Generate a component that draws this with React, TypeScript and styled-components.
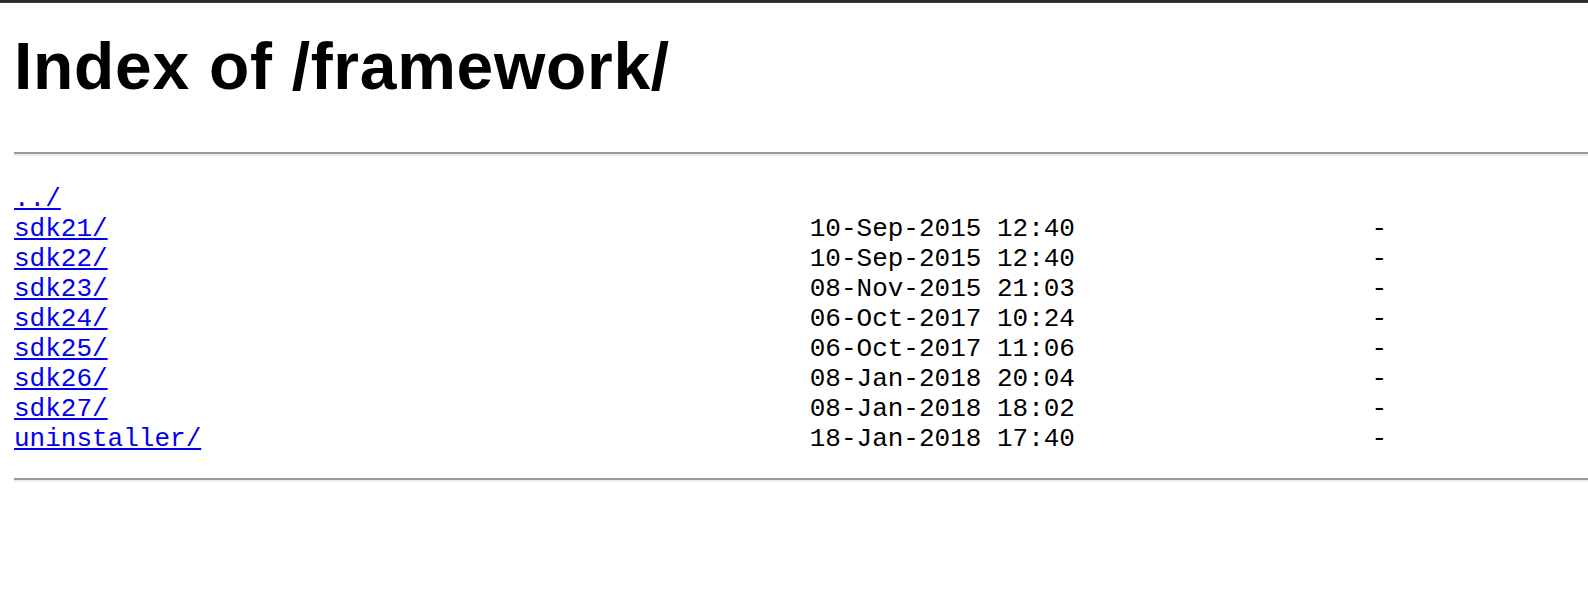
import React from 'react'
import styled, { createGlobalStyle } from 'styled-components'

const GlobalStyle = createGlobalStyle`
  html, body {
    margin: 0;
    padding: 0;
    background: #ffffff;
  }
`

interface Entry {
  name: string
  date?: string
  size?: string
}

const entries: Entry[] = [
  { name: '../' },
  { name: 'sdk21/', date: '10-Sep-2015 12:40', size: '-' },
  { name: 'sdk22/', date: '10-Sep-2015 12:40', size: '-' },
  { name: 'sdk23/', date: '08-Nov-2015 21:03', size: '-' },
  { name: 'sdk24/', date: '06-Oct-2017 10:24', size: '-' },
  { name: 'sdk25/', date: '06-Oct-2017 11:06', size: '-' },
  { name: 'sdk26/', date: '08-Jan-2018 20:04', size: '-' },
  { name: 'sdk27/', date: '08-Jan-2018 18:02', size: '-' },
  { name: 'uninstaller/', date: '18-Jan-2018 17:40', size: '-' },
]

const App: React.FC = () => {
  return (
    <>
      <GlobalStyle />
      <TopBar />
      <Page>
        <Title>Index of /framework/</Title>
        <Rule />
        <Listing>
          {entries.map((e) => (
            <Row key={e.name}>
              <NameCell>
                <FileLink href={e.name}>{e.name}</FileLink>
              </NameCell>
              <DateCell>{e.date}</DateCell>
              <SizeCell>{e.size}</SizeCell>
            </Row>
          ))}
        </Listing>
        <Rule />
      </Page>
    </>
  )
}

export default App

const TopBar = styled.div`
  height: 3px;
  background-color: #2a2a2c;
  border-bottom: 1px solid #3c3c3e;
  box-sizing: border-box;
`

const Page = styled.div`
  padding-left: 14px;
  display: flex;
  flex-direction: column;
`

const Title = styled.h1`
  margin: 25px 0 0;
  font-family: 'Liberation Sans', Arial, Helvetica, sans-serif;
  font-size: 66px;
  font-weight: 700;
  line-height: 76px;
  letter-spacing: 0.7px;
  color: #000000;
`

const Rule = styled.hr`
  margin: 48px 0 0;
  height: 0;
  border: none;
  border-top: 2px solid #9a9a9a;
  border-bottom: 2px solid #ececec;

  & + div {
    margin-top: 28px;
  }
`

const Listing = styled.div`
  display: flex;
  flex-direction: column;
  font-family: 'Liberation Mono', 'Courier New', monospace;
  font-size: 26px;
  line-height: 30px;
  color: #000000;

  & + hr {
    margin-top: 24px;
  }
`

const Row = styled.div`
  display: grid;
  grid-template-columns: 51ch 17ch 20ch;
  white-space: pre;
  height: 30px;
`

const NameCell = styled.span``

const DateCell = styled.span``

const SizeCell = styled.span`
  text-align: right;
`

const FileLink = styled.a`
  color: #0000ee;
  text-decoration: underline;
  text-underline-offset: 2px;
`
